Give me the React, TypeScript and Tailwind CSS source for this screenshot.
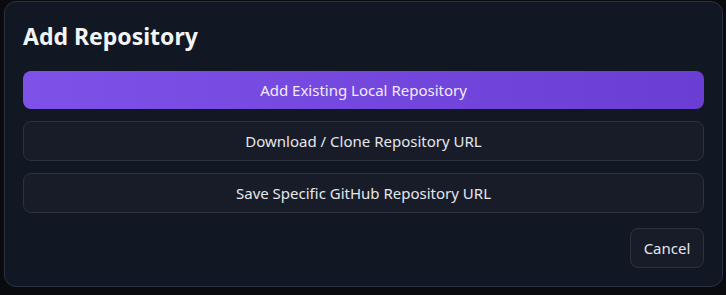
const options = [
  'Download / Clone Repository URL',
  'Save Specific GitHub Repository URL',
];

export default function App() {
  return (
    <div className="w-[726px] h-[295px] bg-[#090b0f] overflow-hidden pt-px pl-[4px]" style={{ fontFamily: '"Noto Sans", "Open Sans", sans-serif' }}>
      <div className="w-[719px] rounded-xl border border-[#2a3142] bg-[#111723] p-[18px]">
        <h2 className="text-[23px] leading-8 font-bold text-[#f3f4f6] mb-[19px]">Add Repository</h2>

        <div className="flex flex-col gap-3">
          <button className="h-[38px] rounded-lg bg-gradient-to-r from-[#7e51e8] to-[#6a3dd3] text-[15px] text-[#f1ecfd]">
            Add Existing Local Repository
          </button>
          {options.map(label => (
            <button key={label} className="h-10 rounded-lg border border-[#2b3240] bg-[#171c28] text-[15px] text-[#e5e7eb]">
              {label}
            </button>
          ))}
        </div>

        <div className="flex justify-end mt-[15px]">
          <button className="h-10 w-[74px] rounded-lg border border-[#2b3240] bg-[#171c28] text-[15px] text-[#e5e7eb]">
            Cancel
          </button>
        </div>
      </div>
    </div>
  );
}
